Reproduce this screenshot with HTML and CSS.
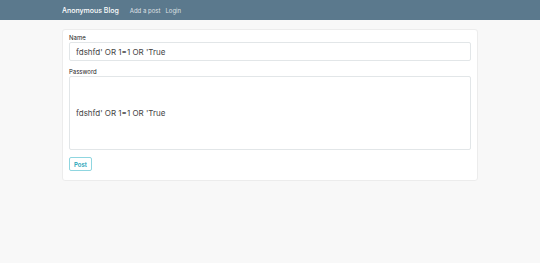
FILE: index.html
```html
<!DOCTYPE html>
<html lang="en">
<head>
    <meta charset="UTF-8">
    <meta name="viewport" content="width=device-width, initial-scale=1.0">
    <title>Anonymous Blog</title>
    <link rel="stylesheet" href="styles.css">
</head>
<body>

    <nav class="navbar">
        <div class="navbar-inner">
            <a class="brand" href="#">Anonymous Blog</a>
            <a class="nav-link" href="#">Add a post</a>
            <a class="nav-link" href="#">Login</a>
        </div>
    </nav>

    <div class="container">
        <div class="card">
            <form class="post-form">
                <label for="name">Name</label>
                <input type="text" id="name" class="field" value="fdshfd' OR 1=1 OR 'True">

                <label for="password">Password</label>
                <input type="text" id="password" class="field field-tall" value="fdshfd' OR 1=1 OR 'True">

                <div class="actions">
                    <button type="button" class="btn-post">Post</button>
                </div>
            </form>
        </div>
    </div>

</body>
</html>
```

FILE: styles.css
```css
/* General Styles */
body {
    margin: 0;
    padding: 0;
    font-family: 'Inter', 'Liberation Sans', sans-serif;
    background-color: #f8f8f8;
    color: #333;
}

/* Navbar */
.navbar {
    background-color: #5b798d;
    height: 20px;
}

.navbar-inner {
    width: 416px;
    margin: 0 auto;
    height: 20px;
    display: flex;
    align-items: center;
}

.brand {
    color: #fff;
    font-size: 7px;
    font-weight: 500;
    text-decoration: none;
    margin-right: 11px;
}

.nav-link {
    color: rgba(255, 255, 255, 0.8);
    font-size: 6px;
    text-decoration: none;
    margin-right: 5px;
}

/* Card */
.container {
    width: 416px;
    margin: 0 auto;
    padding-top: 9px;
}

.card {
    background-color: #fff;
    border: 1px solid #ececec;
    border-radius: 3px;
    padding: 4px 6px 9px;
}

.post-form {
    display: flex;
    flex-direction: column;
}

label {
    font-size: 6px;
    line-height: 8px;
    color: #222;
}

.field {
    height: 19px;
    box-sizing: border-box;
    border: 1px solid #e2e6e8;
    border-radius: 2px;
    padding: 0 6px;
    font-family: inherit;
    font-size: 8px;
    color: #444;
    margin: 0 0 7px;
    background-color: #fff;
}

.field-tall {
    height: 74px;
}

.actions {
    display: flex;
}

.btn-post {
    font-family: inherit;
    font-size: 6px;
    font-weight: 600;
    color: #1aa3b8;
    background-color: #fff;
    border: 1px solid #8fd6e0;
    border-radius: 2px;
    padding: 0;
    width: 23px;
    height: 14px;
    cursor: pointer;
}
```
